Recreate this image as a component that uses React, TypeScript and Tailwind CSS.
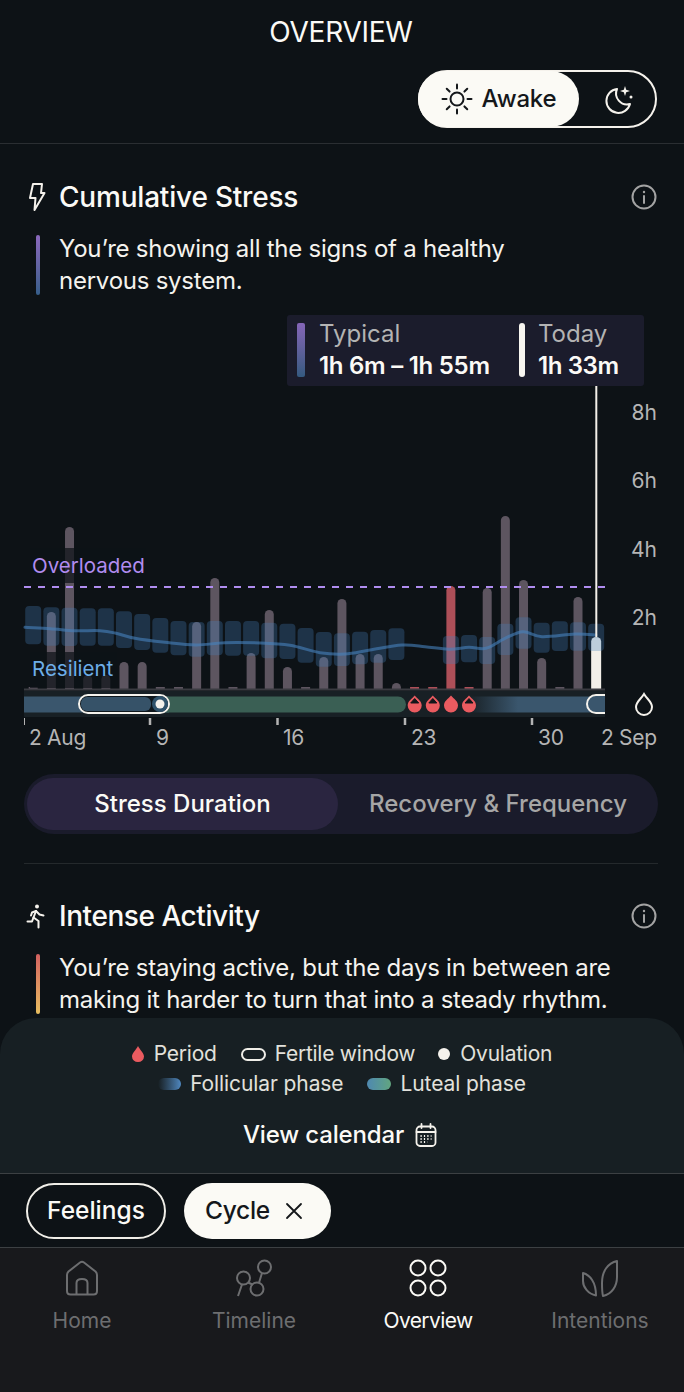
import React from "react";

const barHeights = [2, 77, 162, 14, 14, 27, 27, 2, 2, 67, 111, 2, 36, 79, 22, 2, 32, 90, 35, 35, 6, 2, 2, 103, 2, 101, 173, 109, 31, 2, 92, 52];
const redBars = new Set([21, 22, 23, 24]);
const ranges: (number[] | null)[] = [
  [888, 1003], [892, 1007], [893, 1008], [895, 1007], [895, 1007], [904, 1014], [912, 1020], [924, 1028],
  [933, 1036], [936, 1040], [933, 1036], [933, 1037], [933, 1037], [938, 1045], [941, 1047], [954, 1058],
  [966, 1070], [970, 1068], [965, 1063], [960, 1058], [955, 1050], null, null, [978, 1062], [975, 1057],
  [981, 1062], [941, 1035], [922, 1016], [938, 1028], [934, 1023], [937, 1022], [941, 1023],
];
const X = (i: number) => 33.2 + 18.16 * i;
const Yz = (z: number) => 310 + z / 3;

const trend: [number, number][] = [
  [25, 952], [50, 956], [75, 962], [100, 962], [115, 969], [135, 985], [165, 997], [196, 1005], [225, 998], [260, 999],
  [290, 1006], [320, 1028], [345, 1032], [370, 1020], [402, 1005], [425, 1010], [449, 1018], [469, 1012], [486, 1015],
  [505, 985], [523, 965], [542, 980], [575, 972], [596, 975],
];

function smooth(pts: [number, number][]) {
  const p = pts.map(([x, z]) => [x, Yz(z)] as [number, number]);
  let d = `M${p[0][0]} ${p[0][1].toFixed(1)}`;
  for (let i = 0; i < p.length - 1; i++) {
    const p0 = p[i - 1] || p[i];
    const p1 = p[i];
    const p2 = p[i + 1];
    const p3 = p[i + 2] || p2;
    const c1x = p1[0] + (p2[0] - p0[0]) / 6;
    const c1y = p1[1] + (p2[1] - p0[1]) / 6;
    const c2x = p2[0] - (p3[0] - p1[0]) / 6;
    const c2y = p2[1] - (p3[1] - p1[1]) / 6;
    d += ` C${c1x.toFixed(1)} ${c1y.toFixed(1)} ${c2x.toFixed(1)} ${c2y.toFixed(1)} ${p2[0]} ${p2[1].toFixed(1)}`;
  }
  return d;
}

function Drop({ x, notch }: { x: number; notch: boolean }) {
  return (
    <g>
      <path d={`M${x} 695.5 C${x + 3} 699 ${x + 7} 701 ${x + 7} 705.5 A7 7 0 0 1 ${x - 7} 705.5 C${x - 7} 701 ${x - 3} 699 ${x} 695.5 Z`} fill="#ea5b60" />
      {notch && <path d={`M${x} 698.5 L${x + 4} 703 H${x - 4} Z`} fill="#12161a" stroke="#12161a" strokeLinejoin="round" />}
    </g>
  );
}

function Chart() {
  return (
    <svg viewBox="0 300 684 460" className="block h-[460px] w-[684px]">
      <defs>
        <linearGradient id="foll" x1="0" x2="1" y1="0" y2="0">
          <stop offset="0" stopColor="#3a566d" stopOpacity="0" />
          <stop offset="1" stopColor="#3a566d" />
        </linearGradient>
      </defs>

      {barHeights.map((h, i) => {
        const x = X(i);
        const red = redBars.has(i);
        const today = i === 31;
        const w = today ? 5 : 4.5;
        const fill = today ? "#f3efe9" : red ? "#ad4f58" : "#5d5560";
        if (h <= 2) return <rect key={i} x={x - 4.5} y={687} width={9} height={2} fill={fill} />;
        const r = Math.min(4.5, h);
        return <path key={i} d={`M${x - w} 689 V${689 - h + r} A${w} ${r} 0 0 1 ${x + w} ${689 - h + r} V689 Z`} fill={fill} />;
      })}

      {ranges.map((r, i) =>
        r ? <rect key={i} x={X(i) - 8} y={Yz(r[0])} width={16} height={(r[1] - r[0]) / 3} rx={4} fill="#4682be" fillOpacity={0.3} /> : null,
      )}
      <path d={smooth(trend)} fill="none" stroke="#4682be" strokeOpacity={0.6} strokeWidth={3} strokeLinecap="round" />

      <rect x={595.3} y={386} width={2} height={251} fill="#f3efe9" />

      <rect x={30} y={548} width={116} height={35} fill="#0d1216" fillOpacity={0.72} />
      <rect x={30} y={652} width={87} height={36} fill="#0d1216" fillOpacity={0.72} />
      <text x={32} y={573} className="fill-[#b18cf0] text-[20.5px]">Overloaded</text>
      <text x={32} y={676} className="fill-[#6eaee8] text-[20.5px]">Resilient</text>
      <line x1={24} x2={605} y1={587} y2={587} stroke="#b08df0" strokeWidth={2} strokeDasharray="7 7" />

      <rect x={24} y={691} width={581} height={26} fill="#182025" />
      <rect x={24} y={688.5} width={581} height={2} fill="#3a3b41" />
      <rect x={24} y={696.5} width={145} height={16} fill="#3a566d" />
      <path d="M150 696.5 H398 A8 8 0 0 1 398 712.5 H150 Z" fill="#3a5f54" />
      <rect x={79} y={695} width={90} height={18} rx={9} fill="#0f171c" stroke="#f5f2ec" strokeWidth={2} />
      <rect x={81} y={697} width={70} height={14} rx={6} fill="#365268" />
      <circle cx={160} cy={704} r={8} fill="#30536c" />
      <circle cx={160} cy={704} r={4.5} fill="#f5f2ec" />

      <rect x={468} y={696.5} width={50} height={16} fill="url(#foll)" />
      <rect x={518} y={696.5} width={87} height={16} fill="#3a566d" />
      <path d="M605 695 H596 A9 9 0 0 0 596 713 H605" fill="#3a566d" stroke="#f5f2ec" strokeWidth={2} />

      <Drop x={414.7} notch />
      <Drop x={432.8} notch />
      <Drop x={451} notch={false} />
      <Drop x={469} notch />

      {[150, 277.5, 405, 532].map((x) => (
        <rect key={x} x={x - 1.25} y={718} width={2.5} height={7} fill="#b3b3b3" />
      ))}
      <rect x={24} y={718} width={1} height={7} fill="#b3b3b3" />

      {[
        ["2 Aug", 29, 745],
        ["9", 156, 745],
        ["16", 283, 745],
        ["23", 411, 745],
        ["30", 538, 745],
        ["2 Sep", 601, 745],
      ].map(([t, x, y]) => (
        <text key={t as string} x={x as number} y={y as number} className="fill-[#b5b5b5] text-[21px] tracking-[-0.3px]">{t}</text>
      ))}
      {[
        ["8h", 420],
        ["6h", 488],
        ["4h", 557],
        ["2h", 625],
      ].map(([t, y]) => (
        <text key={t as string} x={657} y={y as number} textAnchor="end" className="fill-[#b5b5b5] text-[21px]">{t}</text>
      ))}
      <path d="M644 694 C647 699 652 702 652 707 A8 8 0 0 1 636 707 C636 702 641 699 644 694 Z" fill="none" stroke="#f5f2ec" strokeWidth={2} />
    </svg>
  );
}

function InfoIcon() {
  return (
    <svg width="26" height="26" viewBox="0 0 26 26" fill="none" stroke="#a3a3a3" strokeWidth="2">
      <circle cx="13" cy="13" r="11.5" />
      <path d="M13 12 V19" strokeLinecap="round" />
      <circle cx="13" cy="8" r="1.2" fill="#a3a3a3" stroke="none" />
    </svg>
  );
}

function SectionHead({ icon, title, tracking }: { icon: React.ReactNode; title: string; tracking: string }) {
  return (
    <div className="flex h-[40px] items-center pr-[27px]">
      <div className="flex w-[59px] justify-end pr-[13px]">{icon}</div>
      <h2 className={`flex-1 text-[28px] font-medium text-[#fbfaf6] ${tracking}`}>{title}</h2>
      <InfoIcon />
    </div>
  );
}

function Quote({ bar, lines, mt }: { bar: string; lines: string[]; mt: string }) {
  return (
    <div className={`flex items-center pl-[36px] ${mt}`}>
      <div className={`h-[60px] w-[4px] rounded-full ${bar}`} />
      <p className="ml-[19px] text-[24px] leading-[32px] tracking-[-0.24px] text-[#f5f3ee]">
        {lines.map((l) => (
          <span key={l} className="block whitespace-nowrap">{l}</span>
        ))}
      </p>
    </div>
  );
}

function Sun() {
  const rays = [0, 45, 90, 135, 180, 225, 270, 315];
  return (
    <svg width="32" height="32" viewBox="-16 -16 32 32" fill="none" stroke="#14171a" strokeWidth="2" strokeLinecap="round">
      <circle r="6.5" />
      {rays.map((a) => (
        <line key={a} x1="0" x2="0" y1="-10.5" y2="-14.5" transform={`rotate(${a})`} />
      ))}
    </svg>
  );
}

function Moon() {
  return (
    <svg width="30" height="32" viewBox="0 0 30 32" fill="none">
      <path d="M13 6 A12 12 0 1 0 26 21 A11 11 0 0 1 13 6 Z" stroke="#f5f2ec" strokeWidth="2" strokeLinejoin="round" />
      <path d="M21 3 L22.2 6.8 L26 8 L22.2 9.2 L21 13 L19.8 9.2 L16 8 L19.8 6.8 Z" fill="#f5f2ec" />
      <circle cx="27" cy="14" r="1.5" fill="#f5f2ec" />
    </svg>
  );
}

function Tab({ label, active, className, children }: { label: string; active?: boolean; className?: string; children: React.ReactNode }) {
  return (
    <div className={`flex w-[172px] shrink-0 flex-col items-center ${className ?? ""}`}>
      <div className="flex h-[38px] items-center">{children}</div>
      <span className={`mt-[10px] text-[21px] leading-[28px] ${active ? "tracking-[-0.6px] text-[#fbfaf6]" : "text-[#6d6e70]"}`}>{label}</span>
    </div>
  );
}

export default function App() {
  return (
    <div className="flex h-[1392px] w-[684px] flex-col overflow-hidden bg-[#0d1216] [font-family:Inter,'Noto_Sans',sans-serif] text-white">
      <main className="min-h-0 flex-1 overflow-hidden">
        <div className="flex h-[64px] items-center justify-center pr-[2px] text-[28px] tracking-[-0.25px] text-[#fbfaf6]">OVERVIEW</div>
        <div className="mt-[6px] flex justify-end pr-[27px]">
          <div className="flex h-[58px] w-[239px] items-center rounded-full border-2 border-[#f5f2ec]">
            <div className="-ml-[2px] flex h-[56px] w-[161px] items-center justify-center gap-[9px] rounded-full bg-[#fbfaf5] text-[24px] font-medium tracking-[-0.2px] text-[#14171a]">
              <Sun />
              <span>Awake</span>
            </div>
            <div className="flex flex-1 justify-center pl-[4px]"><Moon /></div>
          </div>
        </div>
        <div className="mt-[15px] h-px bg-[#2a2e32]" />

        <div className="mt-[33px]">
          <SectionHead
            title="Cumulative Stress"
            tracking="tracking-[-0.2px]"
            icon={
              <svg width="18" height="30" viewBox="0 0 18 30" fill="none" stroke="#f5f2ec" strokeWidth="2" strokeLinejoin="round">
                <path d="M5 2 H14 L13 11 H16.5 L6.5 28 L7.5 16 H2 Z" />
              </svg>
            }
          />
          <Quote
            mt="mt-[16px]"
            bar="bg-gradient-to-b from-[#8a68bd] to-[#355e8a]"
            lines={["You’re showing all the signs of a healthy", "nervous system."]}
          />
        </div>

        <div className="relative mt-[3px] h-[460px]">
          <Chart />
          <div className="absolute left-[287px] top-[15px] flex h-[71px] w-[357px] rounded-[3px] bg-[#1b1c2c]">
            <div className="ml-[10px] mt-[8px] h-[54px] w-[8px] rounded-[2px] bg-gradient-to-b from-[#8565b8] to-[#345a80]" />
            <div className="ml-[14px] w-[200px]">
              <div className="mt-[2px] text-[24px] leading-[33px] text-[#b3b3b3]">Typical</div>
              <div className="whitespace-nowrap text-[24px] font-semibold leading-[32px] tracking-[-0.28px] text-[#fbfaf6]">1h 6m – 1h 55m</div>
            </div>
            <div className="mt-[8px] h-[54px] w-[6px] rounded-[3px] bg-[#f8f6f0]" />
            <div className="ml-[13px]">
              <div className="mt-[2px] text-[24px] leading-[33px] text-[#b3b3b3]">Today</div>
              <div className="whitespace-nowrap text-[24px] font-semibold leading-[32px] tracking-[-0.4px] text-[#fbfaf6]">1h 33m</div>
            </div>
          </div>
        </div>

        <div className="ml-[24px] mr-[26px] mt-[14px] flex h-[60px] items-center rounded-full bg-[#1a1b2b] px-[3px]">
          <div className="flex h-[52px] w-[311px] items-center justify-center rounded-full bg-[#2a2540] text-[24px] font-medium text-[#fbfaf6]">Stress Duration</div>
          <div className="flex flex-1 justify-center pl-[3px] text-[24px] font-medium text-[#a6a6a6]">Recovery &amp; Frequency</div>
        </div>
        <div className="ml-[24px] mr-[26px] mt-[29px] h-px bg-[#24292c]" />

        <div className="mt-[32px]">
          <SectionHead
            title="Intense Activity"
            tracking="tracking-[-0.45px]"
            icon={
              <svg width="20" height="26" viewBox="0 0 20 26" fill="none" stroke="#f5f2ec" strokeWidth="2" strokeLinecap="round" strokeLinejoin="round">
                <circle cx="11" cy="3.5" r="2" fill="#f5f2ec" stroke="none" />
                <path d="M10 8 L7.5 14.5 L12.5 18 L12.5 24.5" />
                <path d="M10 8 L6 9.5 L5 12.5" />
                <path d="M10 8 L13.5 11.5 L17.5 12.5" />
                <path d="M7.5 14.5 L6 18.5 L1.5 18.5" />
              </svg>
            }
          />
          <Quote
            mt="mt-[16px]"
            bar="bg-gradient-to-b from-[#d2605f] to-[#e6bd5e]"
            lines={["You’re staying active, but the days in between are", "making it harder to turn that into a steady rhythm."]}
          />
        </div>
      </main>

      <section className="h-[155px] shrink-0 rounded-t-[36px] bg-[#171f23] pt-[21px]">
        <div className="flex h-[30px] items-center justify-center text-[21px] tracking-[-0.25px] text-[#e2e1dc]">
          <svg width="12" height="16" viewBox="0 0 12 16" className="mr-[10px]">
            <path d="M6 0 C8 4 12 7 12 10.5 A6 5.5 0 0 1 0 10.5 C0 7 4 4 6 0 Z" fill="#ea5b60" />
          </svg>
          <span>Period</span>
          <div className="ml-[24px] mr-[9px] h-[13px] w-[25px] rounded-full border-2 border-[#f0eee8]" />
          <span>Fertile window</span>
          <div className="ml-[23px] mr-[10px] h-[12px] w-[12px] rounded-full bg-[#f5f2ec]" />
          <span>Ovulation</span>
        </div>
        <div className="flex h-[30px] items-center justify-center text-[21px] tracking-[-0.1px] text-[#e2e1dc]">
          <div className="mr-[9px] h-[12px] w-[23px] rounded-full bg-gradient-to-r from-[#171f23] to-[#4f88c0]" />
          <span>Follicular phase</span>
          <div className="ml-[24px] mr-[9px] h-[12px] w-[24px] rounded-full bg-gradient-to-r from-[#4f88b0] to-[#62a57f]" />
          <span>Luteal phase</span>
        </div>
        <div className="mt-[16px] flex h-[40px] items-center justify-center gap-[11px] pr-[4px] text-[24px] font-medium tracking-[-0.15px] text-[#fbfaf6]">
          <span>View calendar</span>
          <svg width="22" height="24" viewBox="0 0 22 24" fill="none" stroke="#f5f2ec" strokeWidth="1.8" strokeLinecap="round">
            <rect x="1.5" y="3.5" width="19" height="19.5" rx="3.5" />
            <path d="M1.5 9 H20.5 M6.5 1 V5 M15.5 1 V5" />
            <path d="M5.5 13 H16.5 M5.5 16 H16.5 M5.5 19 H12.5" strokeDasharray="1.2 2.2" strokeLinecap="butt" strokeWidth="2" />
          </svg>
        </div>
      </section>

      <div className="flex h-[75px] shrink-0 items-center gap-[18px] border-y border-y-[#3c4043] bg-[#0d1216] pl-[26px]">
        <div className="flex h-[56px] w-[140px] items-center justify-center rounded-full border-2 border-[#f0eee8] text-[24.5px] font-medium text-[#fbfaf6]">Feelings</div>
        <div className="flex h-[56px] w-[147px] items-center gap-[15px] rounded-full bg-[#fbfaf5] pl-[21px] text-[24.5px] font-medium tracking-[-0.3px] text-[#14171a]">
          <span>Cycle</span>
          <svg width="18" height="18" viewBox="0 0 18 18" stroke="#14171a" strokeWidth="1.8" strokeLinecap="round">
            <path d="M2 2 L16 16 M16 2 L2 16" />
          </svg>
        </div>
      </div>

      <nav className="flex h-[144px] shrink-0 bg-[#18191c] pt-[11px]">
        <Tab label="Home" className="-ml-[4px]">
          <svg width="34" height="36" viewBox="0 0 34 36" fill="none" stroke="#6d6e70" strokeWidth="2" strokeLinejoin="round">
            <path d="M2 15 Q2 13 3.5 11.5 L15 2.5 Q17 1 19 2.5 L30.5 11.5 Q32 13 32 15 V31 Q32 34.5 28.5 34.5 H5.5 Q2 34.5 2 31 Z" />
            <path d="M11.5 34.5 V23 Q11.5 19 17 19 Q22.5 19 22.5 23 V34.5" />
          </svg>
        </Tab>
        <Tab label="Timeline">
          <svg width="38" height="38" viewBox="0 0 38 38" fill="none" stroke="#6d6e70" strokeWidth="2">
            <circle cx="29.5" cy="8" r="6.5" />
            <circle cx="8.5" cy="19" r="6.5" />
            <circle cx="22" cy="30" r="6.5" />
            <path d="M7 25.5 L3 37 M13 23.5 L17.5 25.5 M27 14 L24 23.8" />
          </svg>
        </Tab>
        <Tab label="Overview" active className="ml-[2px]">
          <svg width="38" height="38" viewBox="0 0 38 38" fill="none" stroke="#fbfaf6" strokeWidth="2">
            <circle cx="9" cy="9" r="7.5" />
            <circle cx="29" cy="9" r="7.5" />
            <circle cx="9" cy="29" r="7.5" />
            <circle cx="29" cy="29" r="7.5" />
          </svg>
        </Tab>
        <Tab label="Intentions">
          <svg width="38" height="38" viewBox="0 0 38 38" fill="none" stroke="#6d6e70" strokeWidth="2" strokeLinejoin="round">
            <path d="M2 14 C9 16 15 23 15 36.5 C7 35 2 28 2 22 Z" />
            <path d="M36 2 C27 4 21 12 21 24 C21 29 21 33 22 37 C31 35 36 27 36 18 Z" />
          </svg>
        </Tab>
      </nav>
    </div>
  );
}
